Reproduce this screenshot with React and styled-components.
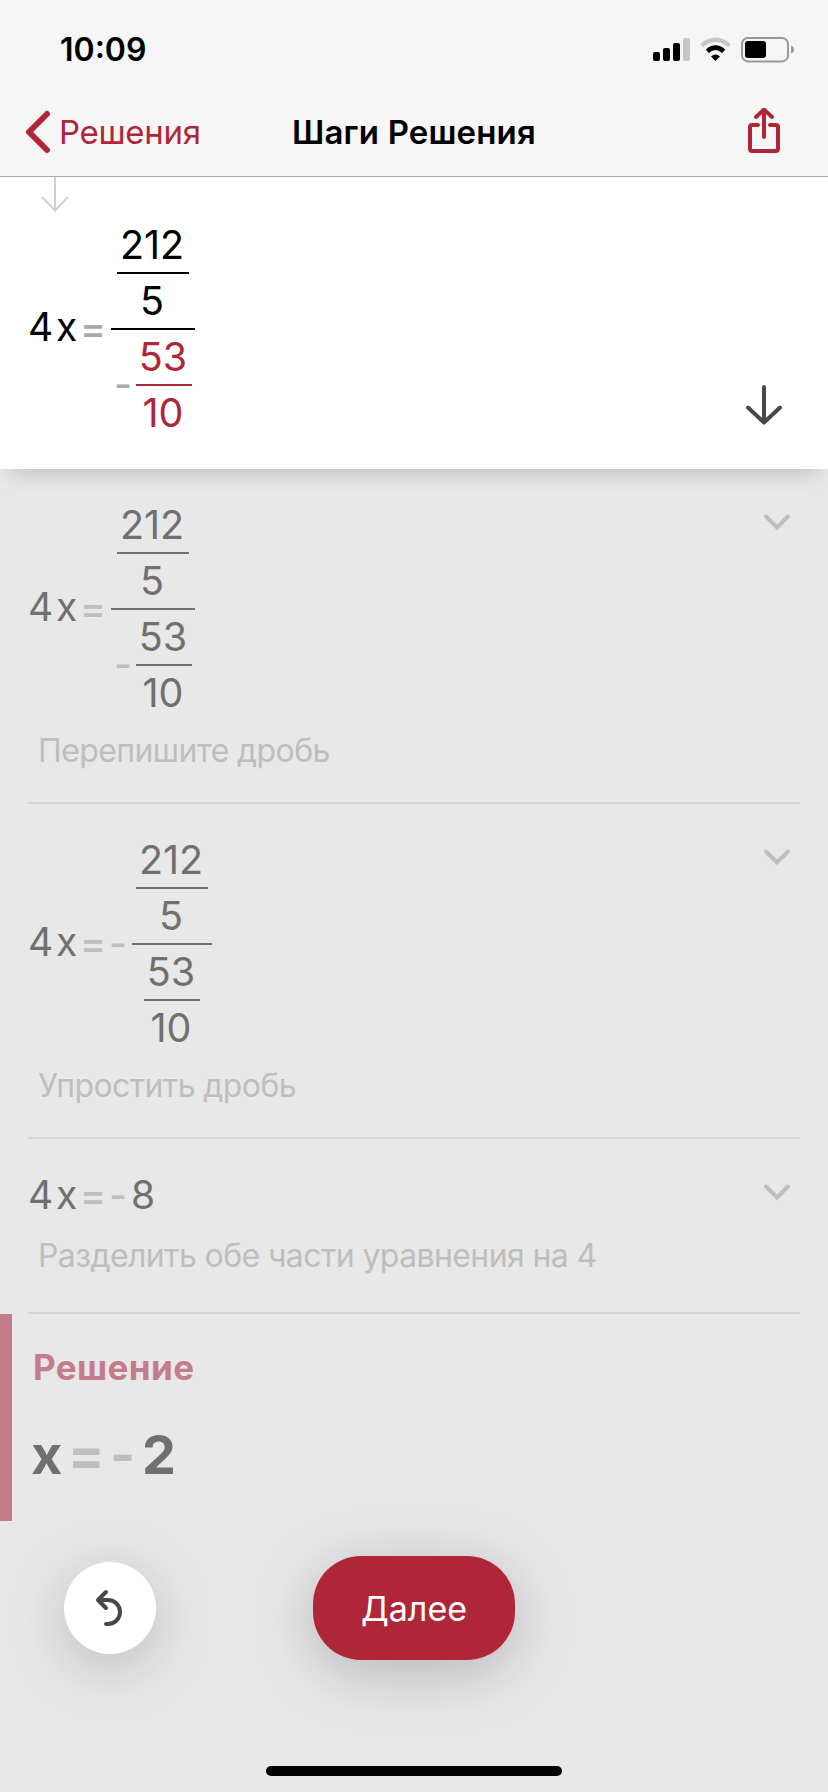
import React from 'react';
import styled, { createGlobalStyle } from 'styled-components';

const GlobalStyle = createGlobalStyle`
  * { box-sizing: border-box; }
  body {
    margin: 0;
    background: #e8e8e8;
    font-family: Inter, "Liberation Sans", sans-serif;
  }
  button {
    border: none;
    padding: 0;
    font-family: inherit;
    background: none;
  }
`;

const RED = '#af2639';

const Over212 = () => (
  <Fraction $width={72}>
    <Num>212</Num>
    <Line />
    <Num>5</Num>
  </Fraction>
);

const Over53 = ({ color }) => (
  <Fraction $width={56} $color={color}>
    <Num>53</Num>
    <Line />
    <Num>10</Num>
  </Fraction>
);

const Left = () => (
  <>
    <Term $width={28}>4</Term>
    <Term $width={24}>x</Term>
    <Sign $width={31}>=</Sign>
  </>
);

// (212/5) / -(53/10)
const BigFraction = ({ color }) => (
  <Equation $lift={5}>
    <Left />
    <Fraction $width={84}>
      <Over212 />
      <Line />
      <Group>
        <Sign $width={22}>-</Sign>
        <Over53 color={color} />
      </Group>
    </Fraction>
  </Equation>
);

const Chevron = () => (
  <ChevronIcon viewBox="0 0 28 18">
    <path d="M3 3.5 L14 14.5 L25 3.5" />
  </ChevronIcon>
);

const App = () => {
  return (
    <Screen>
      <GlobalStyle />
      <Header>
        <StatusBar>
          <Time>10:09</Time>
          <svg width="144" height="28" viewBox="0 0 144 28">
            <rect x="0" y="15" width="7" height="9" rx="2" />
            <rect x="10" y="11" width="7" height="13" rx="2" />
            <rect x="20" y="6" width="7" height="18" rx="2" />
            <rect x="30" y="1" width="7" height="23" rx="2" fill="#c6c6c6" />
            <path d="M48.6 8.6 Q62.5 -3 76.4 8.6" fill="none" stroke="#c6c6c6" strokeWidth="4.4" />
            <path d="M54.3 14.2 Q62.5 7.2 70.7 14.2" fill="none" stroke="#000" strokeWidth="4.6" />
            <path d="M58 19.4 Q62.5 15.6 67 19.4 L62.5 24 Z" />
            <rect x="89" y="1" width="46" height="23.4" rx="6" fill="none" stroke="#999" strokeWidth="2" />
            <rect x="92" y="4" width="21" height="17" rx="3" />
            <path d="M138 8.5 Q141 9.5 141 12.5 Q141 15.5 138 16.5 Z" fill="#999" />
          </svg>
        </StatusBar>
        <NavBar>
          <Back>
            <svg width="28" height="44" viewBox="0 0 28 44" fill="none" stroke={RED} strokeWidth="6" strokeLinecap="round" strokeLinejoin="round">
              <path d="M22 4 L4 22 L22 40" />
            </svg>
            <BackText>Решения</BackText>
          </Back>
          <Title>Шаги Решения</Title>
          <Share>
            <svg width="34" height="48" viewBox="0 0 34 48" fill="none" stroke={RED} strokeWidth="4" strokeLinecap="round" strokeLinejoin="round">
              <path d="M11 17 H5 Q3 17 3 19 V41 Q3 43 5 43 H29 Q31 43 31 41 V19 Q31 17 29 17 H23" />
              <path d="M17 29 V3 M9 9 L17 1.500 L25 9" />
            </svg>
          </Share>
        </NavBar>
      </Header>

      <Current>
        <PrevArrow viewBox="0 0 30 36">
          <path d="M15 0 V34 M2 20 L15 33.5 L28 20" />
        </PrevArrow>
        <BigFraction color={RED} />
        <NextArrow viewBox="0 0 40 44">
          <path d="M20 4 V38 M4 24.5 L20 39.5 L36 24.5" />
        </NextArrow>
      </Current>

      <Steps>
        <Step $height={335}>
          <BigFraction />
          <Caption>Перепишите дробь</Caption>
          <Chevron />
        </Step>
        <Step $height={335}>
          <Equation $lift={5}>
            <Left />
            <Minus $width={23}>-</Minus>
            <Fraction $width={80}>
              <Over212 />
              <Line />
              <Over53 />
            </Fraction>
          </Equation>
          <Caption>Упростить дробь</Caption>
          <Chevron />
        </Step>
        <Step $height={175}>
          <Equation $lift={0}>
            <Left />
            <Minus $width={22}>-</Minus>
            <Term $width={28}>8</Term>
          </Equation>
          <Caption $top={13}>Разделить обе части уравнения на 4</Caption>
          <Chevron />
        </Step>
      </Steps>

      <Solution>
        <SolutionTitle>Решение</SolutionTitle>
        <Answer>
          <Term $width={37}>x</Term>
          <Sign $width={42}>=</Sign>
          <Sign $width={32}>-</Sign>
          <Term $width={32}>2</Term>
        </Answer>
      </Solution>

      <Footer>
        <UndoButton>
          <svg width="30" height="40" viewBox="0 0 30 40" fill="none" stroke="#48484b" strokeWidth="4" strokeLinecap="round" strokeLinejoin="round">
            <path d="M11 4 L3 12 L11 20 M4 12 H13 A12 12 0 0 1 13 36 H11" />
          </svg>
        </UndoButton>
        <NextButton>Далее</NextButton>
      </Footer>
      <HomeBar />
    </Screen>
  );
};

const Screen = styled.div`
  width: 828px;
  height: 1792px;
  display: flex;
  flex-direction: column;
  overflow: hidden;
  background: #e8e8e8;
  color: #000;
`;

const Header = styled.header`
  height: 177px;
  background: #f6f6f6;
  border-bottom: 1px solid #a9a9a9;
`;

const StatusBar = styled.div`
  height: 88px;
  display: flex;
  justify-content: space-between;
  padding: 37px 31px 0 60px;
`;

const Time = styled.div`
  font-size: 32px;
  line-height: 26px;
  font-weight: 600;
`;

const NavBar = styled.div`
  height: 88px;
  display: grid;
  grid-template-columns: 270px 1fr 270px;
  align-items: center;
`;

const Back = styled.button`
  display: flex;
  align-items: center;
  gap: 6px;
  padding-left: 25px;
  color: ${RED};
`;

const BackText = styled.span`
  font-size: 33px;
  line-height: 40px;
  letter-spacing: -0.3px;
`;

const Title = styled.h1`
  margin: 0;
  text-align: center;
  font-size: 33px;
  line-height: 40px;
  font-weight: 600;
  letter-spacing: 0.15px;
  white-space: nowrap;
`;

const Share = styled.button`
  display: flex;
  justify-content: flex-end;
  padding-right: 47px;
`;

const Current = styled.section`
  position: relative;
  height: 292px;
  padding: 41px 28px 0;
  background: #fff;
  box-shadow: 0 14px 20px -10px rgba(0, 0, 0, 0.18);
`;

const PrevArrow = styled.svg`
  position: absolute;
  left: 40px;
  top: 0;
  width: 30px;
  height: 36px;
  fill: none;
  stroke: #d0d0d0;
  stroke-width: 2;
`;

const NextArrow = styled.svg`
  position: absolute;
  right: 44px;
  bottom: 42px;
  width: 40px;
  height: 44px;
  fill: none;
  stroke: #48484b;
  stroke-width: 4;
  stroke-linecap: round;
  stroke-linejoin: round;
`;

const Term = styled.span`
  width: ${(props) => props.$width}px;
  font-size: 39px;
  line-height: 54px;
`;

const Sign = styled(Term)`
  color: #a9a9a9;
  font-weight: 500;
`;

const Minus = styled(Sign)`
  margin-left: -2px;
`;

const Equation = styled.div`
  display: flex;
  align-items: center;

  ${Term} {
    margin-bottom: ${(props) => props.$lift}px;
  }
  ${Sign} {
    margin-bottom: ${(props) => props.$lift && props.$lift - 2}px;
  }
`;

const Fraction = styled.div`
  width: ${(props) => props.$width}px;
  display: flex;
  flex-direction: column;
  align-items: center;
  color: ${(props) => props.$color || 'inherit'};
`;

const Line = styled.div`
  width: 100%;
  height: 2px;
  background: currentColor;
`;

const Group = styled.div`
  display: flex;
  align-items: center;
`;

const Num = styled.div`
  padding-right: 2px;
  font-size: 39.5px;
  line-height: 54px;
`;

const Steps = styled.section`
  padding: 0 28px;
  color: #707070;

  ${Sign} {
    color: #bebebe;
  }
`;

const Step = styled.div`
  position: relative;
  height: ${(props) => props.$height}px;
  padding-top: 29px;
  border-bottom: 2px solid #d5d5d5;
`;

const Caption = styled.div`
  margin-top: ${(props) => props.$top || 10}px;
  padding-left: 10px;
  font-size: 32px;
  line-height: 42px;
  letter-spacing: -0.6px;
  color: #bebebe;
`;

const ChevronIcon = styled.svg`
  position: absolute;
  right: 9px;
  top: 44px;
  width: 28px;
  height: 18px;
  fill: none;
  stroke: #bebebe;
  stroke-width: 4;
  stroke-linecap: round;
`;

const Solution = styled.section`
  height: 207px;
  border-left: 12px solid #c27c8b;
  padding: 31px 0 0 20px;
`;

const SolutionTitle = styled.h2`
  margin: 0;
  padding-left: 1px;
  font-size: 35px;
  line-height: 44px;
  font-weight: 700;
  letter-spacing: 0.4px;
  color: #c27c8b;
`;

const Answer = styled.div`
  display: flex;
  margin: 33px 0 0 -1px;
  color: #707070;

  ${Term} {
    font-size: 54px;
    line-height: 66px;
    font-weight: 700;
  }
  ${Sign} {
    color: #bebebe;
  }
`;

const Footer = styled.footer`
  display: grid;
  grid-template-columns: 249px 202px;
  align-items: center;
  padding: 35px 0 0 64px;
`;

const UndoButton = styled.button`
  width: 92px;
  height: 92px;
  display: flex;
  align-items: center;
  justify-content: center;
  border-radius: 50%;
  background: #fff;
  box-shadow: 0 12px 60px rgba(0, 0, 0, 0.2);
`;

const NextButton = styled.button`
  height: 104px;
  border-radius: 48px;
  background: ${RED};
  color: #fff;
  font-size: 34px;
  box-shadow: 0 12px 60px rgba(0, 0, 0, 0.22);
`;

const HomeBar = styled.div`
  width: 296px;
  height: 10px;
  margin: auto auto 16px;
  border-radius: 5px;
  background: #000;
`;

export default App;
